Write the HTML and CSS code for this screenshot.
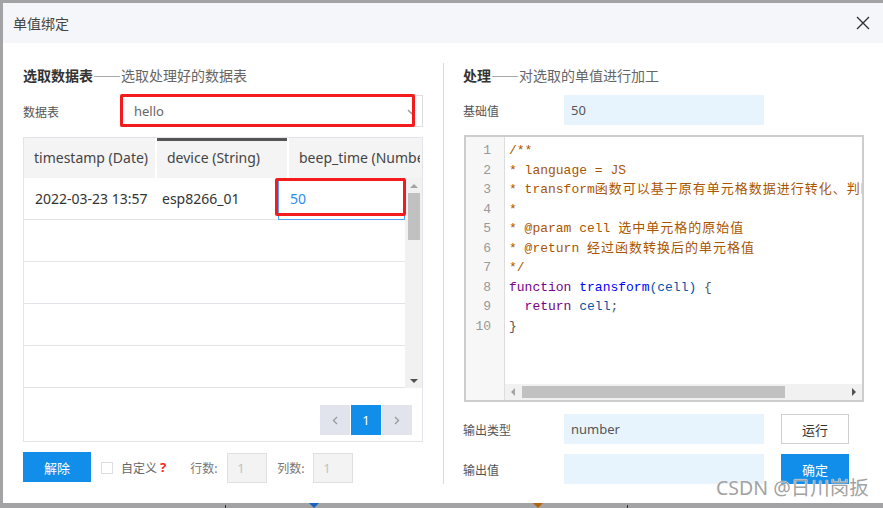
FILE: index.html
```html
<!DOCTYPE html>
<html lang="zh-CN">
<head>
<meta charset="utf-8">
<title>单值绑定</title>
<link rel="stylesheet" href="styles.css">
</head>
<body>
<div class="dialog">
  <div class="titlebar">
    <span class="title">单值绑定</span>
    <svg class="close" width="14" height="14" viewBox="0 0 14 14"><path d="M1 1 L13 13 M13 1 L1 13" stroke="#333" stroke-width="1.4" fill="none"/></svg>
  </div>
  <div class="content">
    <section class="left">
      <h2 class="heading"><b>选取数据表</b>——选取处理好的数据表</h2>
      <div class="field">
        <span class="label">数据表</span>
        <div class="select"><span>hello</span><svg class="caret" width="9" height="6" viewBox="0 0 9 6"><path d="M1 1 L4.5 4.5 L8 1" stroke="#999" stroke-width="1.4" fill="none"/></svg></div>
        <div class="mark mark-select"></div>
      </div>
      <div class="table">
        <div class="thead">
          <div class="th c1">timestamp (Date)</div>
          <div class="th c2 active">device (String)</div>
          <div class="th c3">beep_time (Number)</div>
        </div>
        <div class="tbody">
          <div class="rows">
            <div class="row">
              <div class="td d1">2022-03-23 13:57</div>
              <div class="td d2">esp8266_01</div>
              <div class="td d3"><div class="cell-edit">50</div></div>
              <div class="mark mark-cell"></div>
            </div>
            <div class="row"></div>
            <div class="row"></div>
            <div class="row"></div>
            <div class="row"></div>
          </div>
          <div class="vscroll">
            <div class="vs-btn"><span class="tri-up"></span></div>
            <div class="vs-thumb"></div>
            <div class="vs-space"></div>
            <div class="vs-btn"><span class="tri-down"></span></div>
          </div>
        </div>
        <div class="pager">
          <div class="pg-btn"><svg width="6" height="9" viewBox="0 0 6 9"><path d="M5 1 L1.5 4.5 L5 8" stroke="#999" stroke-width="1.3" fill="none"/></svg></div>
          <div class="pg-btn current">1</div>
          <div class="pg-btn"><svg width="6" height="9" viewBox="0 0 6 9"><path d="M1 1 L4.5 4.5 L1 8" stroke="#999" stroke-width="1.3" fill="none"/></svg></div>
        </div>
      </div>
      <div class="actions">
        <button class="btn primary">解除</button>
        <span class="checkbox"></span>
        <span class="cb-label">自定义</span><span class="help">?</span>
        <span class="small-label rows-label">行数:</span>
        <span class="num-input">1</span>
        <span class="small-label cols-label">列数:</span>
        <span class="num-input">1</span>
      </div>
    </section>
    <div class="divider"></div>
    <section class="right">
      <h2 class="heading"><b>处理</b>——对选取的单值进行加工</h2>
      <div class="field">
        <span class="label">基础值</span>
        <div class="input">50</div>
      </div>
      <div class="editor">
        <div class="gutter">
          <div>1</div><div>2</div><div>3</div><div>4</div><div>5</div>
          <div>6</div><div>7</div><div>8</div><div>9</div><div>10</div>
        </div>
        <div class="code-wrap">
          <div class="code"><div class="cm">/**</div><div class="cm">* language = JS</div><div class="cm">* transform<span class="zh">函数可以基于原有单元格数据进行转化、判断</span></div><div class="cm">*</div><div class="cm">* @param cell <span class="zh">选中单元格的原始值</span></div><div class="cm">* @return <span class="zh">经过函数转换后的单元格值</span></div><div class="cm">*/</div><div><span class="kw">function</span> <span class="def">transform</span><span class="var">(cell)</span> <span class="pn">{</span></div><div>  <span class="kw">return</span> <span class="var">cell</span><span class="pn">;</span></div><div><span class="pn">}</span></div></div>
          <div class="hscroll">
            <div class="hs-btn"><span class="tri-left"></span></div>
            <div class="hs-thumb"></div>
            <div class="hs-space"></div>
            <div class="hs-btn"><span class="tri-right"></span></div>
          </div>
        </div>
      </div>
      <div class="field out-row first">
        <span class="label">输出类型</span>
        <div class="input">number</div>
        <button class="btn ghost">运行</button>
      </div>
      <div class="field out-row">
        <span class="label">输出值</span>
        <div class="input"></div>
        <button class="btn primary">确定</button>
      </div>
    </section>
  </div>
</div>
<div class="watermark">CSDN @日川岗扳</div>
<span class="desk-mark blue"></span>
<span class="desk-mark orange"></span>
<span class="desk-line l1"></span>
<span class="desk-line l2"></span>
</body>
</html>
```

FILE: styles.css
```css
* { box-sizing: border-box; }
html, body { margin: 0; padding: 0; }
body {
  width: 883px;
  height: 508px;
  overflow: hidden;
  background: #a3a3a5;
  font-family: "Noto Sans", "Noto Sans CJK SC", sans-serif;
  position: relative;
}
.dialog {
  margin: 3px 0 0 3px;
  width: 880px;
  height: 500px;
  background: #fff;
  overflow: hidden;
}
.titlebar {
  height: 40px;
  background: #f5f6fa;
  display: flex;
  align-items: center;
  justify-content: space-between;
  padding: 0 13px 0 10px;
}
.title {
  font-family: "Noto Sans CJK SC", sans-serif;
  font-size: 14px;
  color: #444;
}
.content {
  display: flex;
  padding: 22px 0 0 20px;
}
.left { width: 400px; }
.right { width: 401px; }
.divider {
  width: 1px;
  height: 421px;
  margin: -2px 19px 0 20px;
  background: #d9d9d9;
}
.heading {
  margin: 0;
  height: 20px;
  line-height: 20px;
  font-family: "Noto Sans CJK SC", sans-serif;
  font-size: 14px;
  font-weight: normal;
  color: #666;
}
.heading b { color: #333; font-weight: bold; }
.field {
  position: relative;
  display: flex;
  align-items: center;
  margin-top: 10px;
}
.label {
  font-family: "Noto Sans CJK SC", sans-serif;
  font-size: 12px;
  color: #555;
}
.left .label { width: 97px; }
.right .label { width: 101px; }
.select {
  width: 303px;
  height: 32px;
  border: 1px solid #dcdee2;
  display: flex;
  align-items: center;
  justify-content: space-between;
  padding: 0 6px 0 13px;
  font-size: 13px;
  color: #666;
}
.caret { margin-top: 1px; }
.mark {
  position: absolute;
  border: 3px solid #f31b1b;
  border-radius: 2px;
}
.mark-select { left: 97px; top: -1px; width: 295px; height: 33px; }
.table {
  margin-top: 10px;
  width: 400px;
  height: 305px;
  border: 1px solid #e3e4ea;
}
.thead {
  display: flex;
  height: 40px;
  background: #f4f4f4;
  overflow: hidden;
  white-space: nowrap;
}
.th {
  position: relative;
  flex: none;
  font-size: 14px;
  color: #444;
  line-height: 40px;
  padding-left: 10px;
  overflow: hidden;
}
.th.c1 { width: 133px; border-right: 2px solid #fff; }
.th.c2 { width: 132px; border-right: 2px solid #fff; }
.th.c3 { width: 131px; }
.th.active::before {
  content: "";
  position: absolute;
  left: 0; right: 0; top: 0;
  height: 3px;
  background: #555;
}
.tbody { display: flex; height: 210px; }
.rows { width: 381px; }
.row {
  position: relative;
  display: flex;
  height: 42px;
  border-bottom: 1px solid #e3e4ea;
}
.td {
  font-size: 14px;
  color: #333;
  line-height: 41px;
  white-space: nowrap;
}
.d1 { width: 133px; padding-left: 11px; }
.d2 { width: 121px; padding-left: 5px; }
.d3 { width: 127px; }
.cell-edit {
  height: 42px;
  border: 1px solid #57a3f3;
  color: #2d8cf0;
  padding-left: 11px;
  line-height: 40px;
}
.mark-cell { left: 251px; top: 0; width: 131px; height: 38px; }
.vscroll {
  width: 17px;
  background: #f1f1f1;
  display: flex;
  flex-direction: column;
  align-items: center;
}
.vs-btn {
  height: 15px;
  width: 17px;
  display: flex;
  align-items: center;
  justify-content: center;
}
.vs-thumb { width: 12px; height: 47px; background: #c1c1c1; }
.vs-space { flex: 1; }
.tri-up, .tri-down, .tri-left, .tri-right { width: 0; height: 0; border: 4px solid transparent; }
.tri-up { border-bottom-color: #a3a3a3; border-top-width: 0; }
.tri-down { border-top-color: #505050; border-bottom-width: 0; }
.tri-left { border-right-color: #a3a3a3; border-left-width: 0; }
.tri-right { border-left-color: #505050; border-right-width: 0; }
.pager {
  display: flex;
  justify-content: flex-end;
  gap: 1px;
  padding: 17px 10px 0 0;
}
.pg-btn {
  width: 30px;
  height: 30px;
  background: #e1e4ec;
  display: flex;
  align-items: center;
  justify-content: center;
  font-size: 13px;
  color: #fff;
}
.pg-btn.current { background: #108ee9; }
.actions {
  display: flex;
  align-items: center;
  margin-top: 10px;
  height: 30px;
}
.btn {
  width: 68px;
  height: 30px;
  border: 0;
  padding: 0;
  font-family: "Noto Sans CJK SC", sans-serif;
  font-size: 13px;
  cursor: pointer;
}
.btn.primary { background: #108ee9; color: #fff; }
.btn.ghost { background: #fff; color: #333; border: 1px solid #cfcfcf; }
.checkbox {
  width: 12px;
  height: 12px;
  border: 1px solid #dcdee2;
  background: #fff;
  margin: 2px 0 0 10px;
}
.cb-label {
  margin-left: 8px;
  font-family: "Noto Sans CJK SC", sans-serif;
  font-size: 12px;
  color: #666;
}
.help {
  margin-left: 3px;
  color: #f22;
  font-size: 13px;
  font-weight: bold;
}
.small-label {
  font-family: "Noto Sans CJK SC", sans-serif;
  font-size: 12px;
  color: #777;
}
.rows-label { margin-left: 24px; width: 37px; }
.cols-label { margin-left: 10px; width: 36px; }
.num-input {
  width: 40px;
  height: 30px;
  margin-top: 2px;
  border: 1px solid #e0e0e0;
  background: #f3f3f3;
  color: #c2c2c2;
  font-size: 13px;
  line-height: 28px;
  padding-left: 9px;
}
.input {
  width: 200px;
  height: 30px;
  background: #e8f4fd;
  font-size: 13px;
  color: #555;
  line-height: 30px;
  padding-left: 7px;
}
.out-row .btn { margin-left: 17px; }
.out-row.first { margin-top: 12px; }
.editor {
  margin: 10px 0 0 1px;
  width: 400px;
  height: 267px;
  border: 2px solid #cdcdcd;
  display: flex;
}
.gutter {
  width: 39px;
  background: #f7f7f7;
  border-right: 1px solid #dddddd;
  padding: 4px 13px 0 0;
  text-align: right;
  font-family: "Liberation Mono", monospace;
  font-size: 13px;
  line-height: 19.55px;
  color: #999;
}
.gutter div { height: 19.55px; }
.code-wrap {
  flex: 1;
  display: flex;
  flex-direction: column;
  min-width: 0;
}
.code {
  flex: 1;
  overflow: hidden;
  padding: 4px 0 0 4px;
  font-family: "Liberation Mono", "Noto Sans CJK SC", monospace;
  font-size: 13px;
  line-height: 19.55px;
  white-space: pre;
  color: #444;
}
.code div { height: 19.55px; }
.cm { color: #a50; }
.zh { letter-spacing: 1px; font-family: "Noto Sans CJK SC", sans-serif; line-height: 1; }
.kw { color: #708; }
.def { color: #00f; }
.var { color: #05a; }
.pn { color: #555; }
.hscroll {
  height: 16px;
  background: #f1f1f1;
  display: flex;
  align-items: center;
}
.hs-btn {
  width: 16px;
  height: 16px;
  display: flex;
  align-items: center;
  justify-content: center;
}
.hs-thumb { width: 263px; height: 12px; background: #c1c1c1; margin-left: 1px; }
.hs-space { flex: 1; }
.watermark {
  position: absolute;
  left: 716px;
  top: 475px;
  font-family: "Noto Sans", "Noto Sans CJK SC", sans-serif;
  font-size: 19.5px;
  line-height: 26px;
  color: #a2a2a2;
  text-shadow: 0 0 1px #fff, 0 0 1px #fff;
  white-space: nowrap;
}
.desk-mark {
  position: absolute;
  top: 503px;
  width: 0;
  height: 0;
  border: 5px solid transparent;
  border-bottom-width: 0;
}
.desk-mark.blue { left: 309px; border-top-color: #1565c0; }
.desk-mark.orange { left: 533px; border-top-color: #b4620e; }
.desk-line {
  position: absolute;
  top: 505px;
  width: 1px;
  height: 3px;
  background: #333;
}
.desk-line.l1 { left: 225px; }
.desk-line.l2 { left: 627px; }
```
